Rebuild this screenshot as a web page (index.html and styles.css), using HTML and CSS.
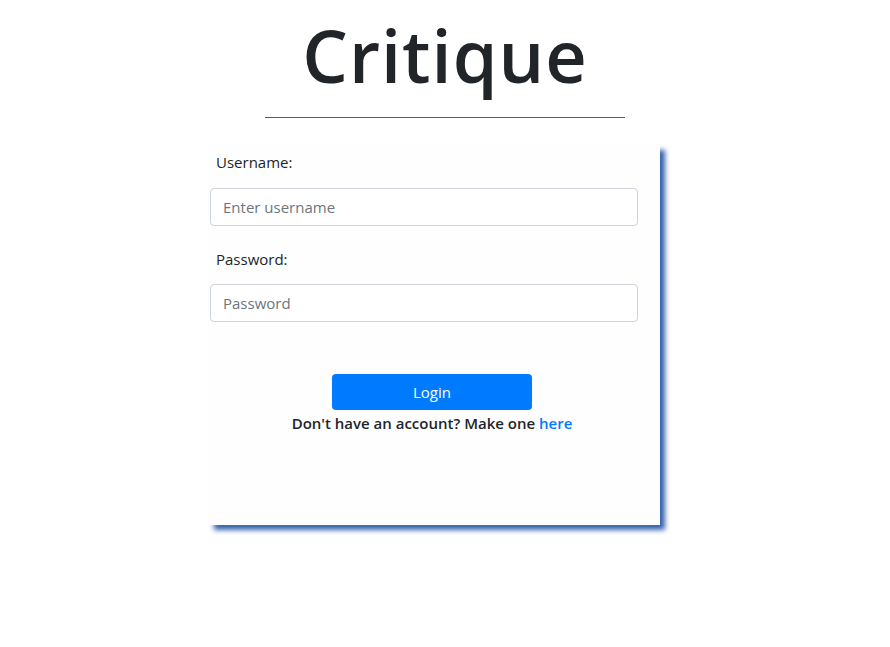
FILE: index.html
```html
<!DOCTYPE html>
<html lang="en">
<head>
<meta charset="utf-8">
<title>Critique</title>
<link rel="stylesheet" href="styles.css">
</head>
<body>
<header class="brand">
  <h1 class="brand-title">Critique</h1>
  <hr class="brand-rule">
</header>
<main class="login-card">
  <form class="login-form">
    <div class="field">
      <label class="field-label" for="username">Username:</label>
      <input class="field-input" id="username" type="text" placeholder="Enter username">
    </div>
    <div class="field">
      <label class="field-label" for="password">Password:</label>
      <input class="field-input" id="password" type="password" placeholder="Password">
    </div>
    <div class="actions">
      <button class="btn-login" type="button">Login</button>
      <p class="signup">Don't have an account? Make one <a class="signup-link" href="#">here</a></p>
    </div>
  </form>
</main>
</body>
</html>
```
FILE: styles.css
```css
* { box-sizing: border-box; }
html, body { margin: 0; padding: 0; background: #fff; }
body {
  font-family: "Open Sans", "Noto Sans", sans-serif;
  color: #212529;
  font-size: 16px;
  line-height: 1.5;
  padding-bottom: 60px;
}
.brand {
  display: flex;
  flex-direction: column;
  align-items: center;
  padding-top: 12px;
}
.brand-title {
  margin: 0;
  font-size: 72px;
  font-weight: 600;
  line-height: 1.2;
  letter-spacing: 1px;
  color: #212529;
}
.brand-rule {
  width: 360px;
  margin: 19px 0 0 -1px;
  border: 0;
  border-top: 1px solid #3461a8;
}
.login-card {
  width: 451px;
  height: 380px;
  margin: 27px 0 0 209px;
  background: #fefeff;
  box-shadow: 5px 5px 5px #3563ad;
}
.login-form {
  padding: 6px 22px 0 1px;
}
.field { display: flex; flex-direction: column; }
.field-label {
  padding-left: 6px;
  margin-bottom: 14px;
  font-size: 15px;
}
.field-input {
  height: 38px;
  padding: 6px 12px;
  border: 1px solid #ced4da;
  border-radius: 4px;
  font: inherit;
  font-size: 15px;
  color: #495057;
  background: #fff;
  margin-bottom: 22px;
}
.field-input::placeholder { color: #6c757d; }
.actions {
  display: flex;
  flex-direction: column;
  align-items: center;
  padding-top: 30px;
  padding-left: 16px;
}
.btn-login {
  width: 200px;
  height: 36px;
  border: 0;
  border-radius: 4px;
  background: #007bff;
  color: #fff;
  font: inherit;
  font-size: 15px;
}
.signup {
  margin: 2px 0 0;
  font-size: 15px;
  font-weight: 600;
}
.signup-link { color: #007bff; text-decoration: none; }
```
